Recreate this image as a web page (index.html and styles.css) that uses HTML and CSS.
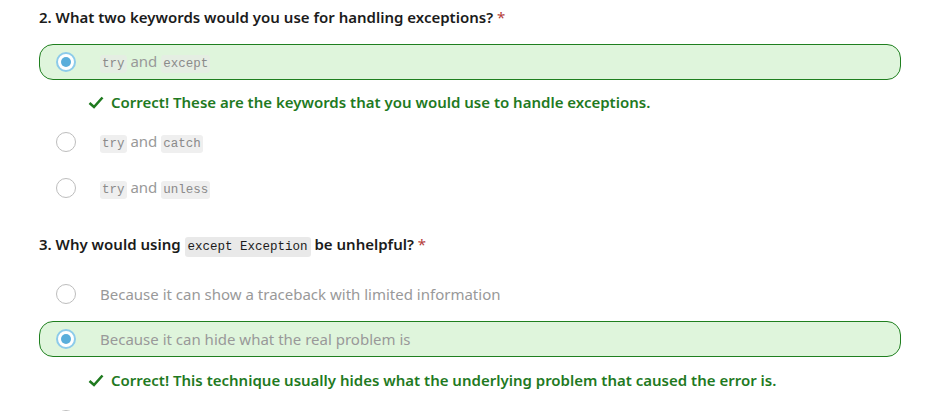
FILE: index.html
```html
<!DOCTYPE html>
<html>
<head>
<meta charset="utf-8">
<link rel="stylesheet" href="styles.css">
</head>
<body>
<div class="quiz">
  <section class="question q2">
    <h3 class="q-title">2. What two keywords would you use for handling exceptions? <span class="req">*</span></h3>
    <div class="option selected">
      <span class="radio checked"></span>
      <span class="label"><code>try</code> and <code>except</code></span>
    </div>
    <div class="feedback">
      <svg class="check" viewBox="0 0 16 13" width="16" height="13"><path d="M1.5 7 L6 11 L14.5 1.5" fill="none" stroke="#1f7a1f" stroke-width="2.6"/></svg>
      <span>Correct! These are the keywords that you would use to handle exceptions.</span>
    </div>
    <div class="option">
      <span class="radio"></span>
      <span class="label"><code>try</code> and <code>catch</code></span>
    </div>
    <div class="option">
      <span class="radio"></span>
      <span class="label"><code>try</code> and <code>unless</code></span>
    </div>
  </section>
  <section class="question q3">
    <h3 class="q-title">3. Why would using <code class="inline">except Exception</code> be unhelpful? <span class="req">*</span></h3>
    <div class="option">
      <span class="radio"></span>
      <span class="label">Because it can show a traceback with limited information</span>
    </div>
    <div class="option selected">
      <span class="radio checked"></span>
      <span class="label">Because it can hide what the real problem is</span>
    </div>
    <div class="feedback">
      <svg class="check" viewBox="0 0 16 13" width="16" height="13"><path d="M1.5 7 L6 11 L14.5 1.5" fill="none" stroke="#1f7a1f" stroke-width="2.6"/></svg>
      <span>Correct! This technique usually hides what the underlying problem that caused the error is.</span>
    </div>
    <div class="option">
      <span class="radio"></span>
      <span class="label"></span>
    </div>
  </section>
</div>
</body>
</html>
```
FILE: styles.css
```css
* { box-sizing: border-box; }
html, body { margin: 0; padding: 0; background: #fff; }
body {
  font-family: "Noto Sans", "Open Sans", sans-serif;
  font-size: 15px;
  color: #222;
  overflow: hidden;
  height: 411px;
}
.quiz {
  width: 862px;
  margin-left: 39px;
}
.question { display: flex; flex-direction: column; }
.q2 { padding-top: 5px; }
.q3 { padding-top: 16px; }
.q-title {
  margin: 0;
  font-size: 15px;
  font-weight: 600;
  line-height: 24px;
  color: #1b1b1b;
}
.q2 .q-title { margin-bottom: 15px; }
.q3 .q-title { margin-bottom: 17px; }
.req { color: #b5403a; font-weight: 400; }
.option {
  display: flex;
  align-items: center;
  height: 36px;
  border: 1px solid transparent;
  border-radius: 14px;
  padding-left: 16px;
  margin-bottom: 10px;
}
.q3 .option { margin-bottom: 9px; }
.option.selected {
  background: #dff5dc;
  border-color: #1f7f1f;
}
.radio {
  width: 20px;
  height: 20px;
  border-radius: 50%;
  border: 1px solid #bdbdbd;
  background: #fff;
  flex: none;
  margin-right: 24px;
  display: flex;
  align-items: center;
  justify-content: center;
}
.radio.checked {
  border: 2px solid #8dcbea;
}
.radio.checked::after {
  content: "";
  width: 10px;
  height: 10px;
  border-radius: 50%;
  background: #5aaedb;
}
.label {
  color: #999;
  font-size: 15px;
  line-height: 20px;
}
.label code {
  font-family: "Liberation Mono", "DejaVu Sans Mono", monospace;
  font-size: 12.5px;
  background: #efefef;
  color: #8a8a8a;
  padding: 2px 2px;
  border-radius: 3px;
}
.selected .label code { background: #e5eee3; }
code.inline {
  font-family: "Liberation Mono", "DejaVu Sans Mono", monospace;
  font-size: 12.5px;
  font-weight: 400;
  background: #e9e9e9;
  color: #1b1b1b;
  padding: 3px 3px;
  border-radius: 3px;
}
.feedback {
  display: flex;
  align-items: center;
  height: 24px;
  margin: 0 0 10px 49px;
  color: #1f7a1f;
  font-weight: 600;
  font-size: 15px;
}
.q3 .feedback { margin-top: 2px; }
.check { margin-right: 7px; flex: none; }
```
